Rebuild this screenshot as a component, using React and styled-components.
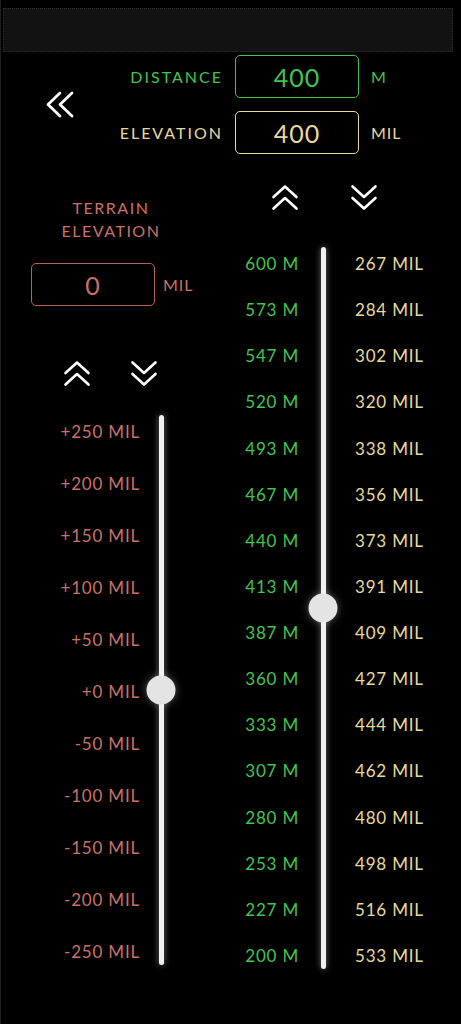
import React, { useState } from 'react';
import styled, { createGlobalStyle } from 'styled-components';

const GREEN = '#42c550';
const YELLOW = '#e8da9f';
const RED = '#c9716b';
const RED_LINE = '#b4625e';

const GlobalStyle = createGlobalStyle`
  html, body {
    margin: 0;
    background: #000;
  }
  body {
    font-family: Lato, "Noto Sans", sans-serif;
  }
`;

const Page = styled.div`
  min-height: 1024px;
  box-sizing: border-box;
  padding: 8px 8px 0 2px;
  background: #000;
  border-left: 1px solid #1f1f1f;
`;

const TopBar = styled.div`
  height: 44px;
  box-sizing: border-box;
  background: #121212;
  border: 1px dotted #2e2e2e;
`;

const Header = styled.div`
  display: grid;
  grid-template-columns: 86px 124px 124px auto;
  grid-template-rows: 43px 43px;
  column-gap: 12px;
  row-gap: 13px;
  margin: 3px 0 0 -2px;
  align-items: center;
`;

const BackButton = styled.button`
  grid-row: 1 / span 2;
  justify-self: start;
  margin-left: 44px;
  padding: 0;
  border: 0;
  background: none;
  cursor: pointer;
  display: flex;
`;

const FieldLabel = styled.span`
  justify-self: end;
  color: ${p => p.$color};
  font-size: 16px;
  letter-spacing: 2px;
`;

const Unit = styled.span`
  color: ${p => p.$color};
  font-size: 16px;
  letter-spacing: 1px;
`;

const ValueBox = styled.input`
  width: ${p => p.$width || 124}px;
  height: 43px;
  box-sizing: border-box;
  border: 1.5px solid ${p => p.$color};
  border-radius: 5px;
  background: #000;
  color: ${p => p.$color};
  font-family: Lato, "Noto Sans", sans-serif;
  font-size: 25px;
  letter-spacing: 1px;
  text-align: center;
  outline: none;
  padding: 0;
`;

const Main = styled.div`
  display: flex;
  margin-left: -2px;
`;

const TerrainColumn = styled.div`
  width: 220px;
  flex-shrink: 0;
  display: flex;
  flex-direction: column;
`;

const TerrainTitle = styled.div`
  margin-top: 42px;
  text-align: center;
  color: ${RED};
  font-size: 16px;
  line-height: 23px;
  letter-spacing: 1.5px;
`;

const TerrainRow = styled.div`
  display: flex;
  align-items: center;
  gap: 8px;
  margin: 21px 0 0 30px;
`;

const RangeColumn = styled.div`
  flex: 1;
  display: flex;
  flex-direction: column;
`;

const StepRow = styled.div`
  display: flex;
  gap: ${p => p.$gap}px;
  padding-left: ${p => p.$left}px;
  margin-top: ${p => p.$top}px;
`;

const StepButton = styled.button`
  padding: 0;
  border: 0;
  background: none;
  cursor: pointer;
  display: flex;
`;

const Scale = styled.div`
  display: grid;
  grid-template-columns: ${p => p.$columns};
  column-gap: ${p => p.$gap}px;
  height: ${p => p.$height}px;
  margin-top: ${p => p.$top}px;
`;

const Ticks = styled.div`
  display: flex;
  flex-direction: column;
  justify-content: space-between;
  padding: 7px 0 3px ${p => p.$indent || 0}px;
  text-align: ${p => p.$align};
`;

const Tick = styled.span`
  color: ${p => p.$color};
  font-size: 17px;
  line-height: 20px;
  letter-spacing: 0.8px;
  white-space: nowrap;
`;

const Rail = styled.div`
  position: relative;
  justify-self: center;
  width: 5px;
  border-radius: 3px;
  background: #f0f0f0;
  box-shadow: 0 0 6px rgba(255, 255, 255, 0.45);
`;

const Thumb = styled.div`
  position: absolute;
  left: 50%;
  width: 29px;
  height: 29px;
  border-radius: 50%;
  background: #e4e4e4;
  box-shadow: 0 0 8px rgba(255, 255, 255, 0.35);
  transform: translate(-50%, -50%);
`;

const DoubleChevron = ({ dir }) => (
  <svg width="28" height="27" viewBox="0 0 28 27" fill="none" stroke="#fff" strokeWidth="2.6" strokeLinecap="round" strokeLinejoin="round">
    {dir === 'up' ? (
      <>
        <path d="M2.5 13 L14 2.5 L25.5 13" />
        <path d="M2.5 24.5 L14 14 L25.5 24.5" />
      </>
    ) : (
      <>
        <path d="M2.5 2.5 L14 13 L25.5 2.5" />
        <path d="M2.5 14 L14 24.5 L25.5 14" />
      </>
    )}
  </svg>
);

const BackIcon = () => (
  <svg width="30" height="27" viewBox="0 0 30 27" fill="none" stroke="#fff" strokeWidth="2.8" strokeLinecap="round" strokeLinejoin="round">
    <path d="M15 2 L3 13.5 L15 25" />
    <path d="M27 2 L15 13.5 L27 25" />
  </svg>
);

const distances = [600, 573, 547, 520, 493, 467, 440, 413, 387, 360, 333, 307, 280, 253, 227, 200];
const elevations = [267, 284, 302, 320, 338, 356, 373, 391, 409, 427, 444, 462, 480, 498, 516, 533];
const offsets = [250, 200, 150, 100, 50, 0, -50, -100, -150, -200, -250];

export default function App() {
  const [distance] = useState(400);
  const [terrain] = useState(0);

  const rangePos = ((600 - distance) / 400) * 100;
  const terrainPos = ((250 - terrain) / 500) * 100;

  return (
    <Page>
      <GlobalStyle />
      <TopBar />

      <Header>
        <BackButton aria-label="back"><BackIcon /></BackButton>
        <FieldLabel $color={GREEN}>DISTANCE</FieldLabel>
        <ValueBox $color={GREEN} defaultValue={distance} />
        <Unit $color={GREEN}>M</Unit>
        <FieldLabel $color={YELLOW}>ELEVATION</FieldLabel>
        <ValueBox $color={YELLOW} defaultValue="400" />
        <Unit $color={YELLOW}>MIL</Unit>
      </Header>

      <Main>
        <TerrainColumn>
          <TerrainTitle>TERRAIN<br />ELEVATION</TerrainTitle>
          <TerrainRow>
            <ValueBox $color={RED_LINE} style={{ color: RED }} defaultValue={terrain} />
            <Unit $color={RED}>MIL</Unit>
          </TerrainRow>
          <StepRow $left={62} $gap={39} $top={54}>
            <StepButton aria-label="up"><DoubleChevron dir="up" /></StepButton>
            <StepButton aria-label="down"><DoubleChevron dir="down" /></StepButton>
          </StepRow>
          <Scale $columns="139px 24px" $gap={9} $height={550} $top={28}>
            <Ticks $align="right">
              {offsets.map(o => (
                <Tick key={o} $color={RED}>{o >= 0 ? '+' : ''}{o} MIL</Tick>
              ))}
            </Ticks>
            <Rail>
              <Thumb style={{ top: `${terrainPos}%` }} />
            </Rail>
          </Scale>
        </TerrainColumn>

        <RangeColumn>
          <StepRow $left={50} $gap={51} $top={30}>
            <StepButton aria-label="up"><DoubleChevron dir="up" /></StepButton>
            <StepButton aria-label="down"><DoubleChevron dir="down" /></StepButton>
          </StepRow>
          <Scale $columns="78px 24px 1fr" $gap={12} $height={722} $top={36}>
            <Ticks $align="right">
              {distances.map(d => (
                <Tick key={d} $color={GREEN}>{d} M</Tick>
              ))}
            </Ticks>
            <Rail>
              <Thumb style={{ top: `${rangePos}%` }} />
            </Rail>
            <Ticks $align="left" $indent={8}>
              {elevations.map(e => (
                <Tick key={e} $color={YELLOW}>{e} MIL</Tick>
              ))}
            </Ticks>
          </Scale>
        </RangeColumn>
      </Main>
    </Page>
  );
}
